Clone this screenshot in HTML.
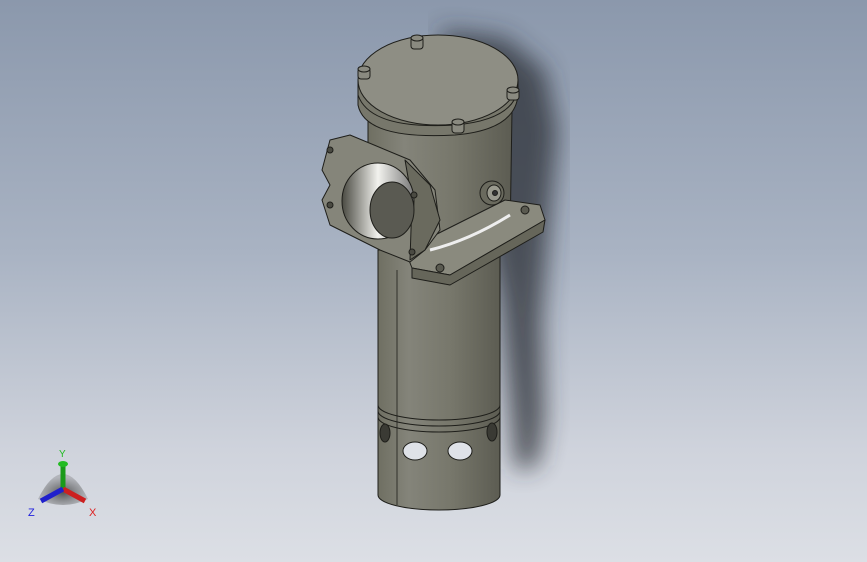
<!DOCTYPE html>
<html><head><style>
html,body{margin:0;padding:0;width:867px;height:562px;overflow:hidden}
body{background:linear-gradient(180deg,#8b98ac 0%,#a9b3c3 45%,#cfd3dc 80%,#dcdfe5 100%)}
svg{position:absolute;left:0;top:0}
</style></head><body>
<svg width="867" height="562" viewBox="0 0 867 562">
<defs>
<linearGradient id="cyl" x1="0" x2="1" y1="0" y2="0">
<stop offset="0" stop-color="#6f6f62"/><stop offset="0.25" stop-color="#84847a"/><stop offset="0.6" stop-color="#77776b"/><stop offset="1" stop-color="#5c5c52"/>
</linearGradient>
<linearGradient id="bore" x1="0" x2="1"><stop offset="0" stop-color="#4a4a42"/><stop offset="0.5" stop-color="#f2f2ee"/><stop offset="1" stop-color="#777"/></linearGradient>
<filter id="bl"><feGaussianBlur stdDeviation="12"/></filter>
<radialGradient id="ax" cx="0.5" cy="0.6" r="0.5"><stop offset="0" stop-color="#333" stop-opacity="0.8"/><stop offset="1" stop-color="#666" stop-opacity="0.3"/></radialGradient>
</defs>
<!-- shadow -->
<path d="M440 30 L505 38 L545 70 L558 130 L550 220 L542 320 L545 420 L538 465 L515 470 L500 300 Z" fill="#2b2f36" opacity="0.75" filter="url(#bl)"/>
<g stroke="#1e1e1a" stroke-width="1" stroke-linejoin="round">
<path d="M378 250 L378 495 A61 15 0 0 0 500 495 L500 250 Z" fill="url(#cyl)"/>
<line x1="397" y1="270" x2="397" y2="505" stroke-width="0.8"/>
<path d="M378 405 A61 15 0 0 0 500 405" fill="none"/>
<path d="M378 411 A61 15 0 0 0 500 411" fill="none"/>
<path d="M378 417 A61 15 0 0 0 500 417" fill="none"/>
<ellipse cx="385" cy="433" rx="5" ry="9" fill="#3a3a34"/>
<ellipse cx="415" cy="451" rx="12" ry="9" fill="#dfe2e8"/>
<ellipse cx="460" cy="451" rx="12" ry="9" fill="#dfe2e8"/>
<ellipse cx="492" cy="432" rx="5" ry="9" fill="#3a3a34"/>
<path d="M368 110 L368 240 L510 240 L512 110 Z" fill="url(#cyl)"/>
<path d="M405 250 L505 200 L540 205 L545 220 L450 275 L412 268 Z" fill="#8a8a7e"/>
<path d="M412 268 L450 275 L545 220 L543 232 L450 285 L412 278 Z" fill="#66665a"/>
<path d="M430 250 Q470 240 510 215" fill="none" stroke="#eee" stroke-width="3"/>
<circle cx="525" cy="210" r="4" fill="#5a5a50"/>
<circle cx="440" cy="268" r="4" fill="#5a5a50"/>
<circle cx="412" cy="256" r="3" fill="#5a5a50"/>
<ellipse cx="492" cy="193" rx="12" ry="12" fill="#6a6a5e"/>
<ellipse cx="494" cy="193" rx="7" ry="8" fill="#9a9a8e"/>
<circle cx="495" cy="193" r="2.5" fill="#333"/>
<path d="M358 80 L358 105 Q365 140 455 135 Q515 130 518 95 L518 80 Z" fill="#77776b"/>
<path d="M358 95 Q370 130 455 125 Q512 120 518 90" fill="none"/>
<ellipse cx="438" cy="80" rx="80" ry="45" fill="#8e8e84"/>
<g fill="#8a8a80">
<rect x="411" y="37" width="12" height="12" rx="3"/><ellipse cx="417" cy="38" rx="6" ry="3"/>
<rect x="358" y="68" width="12" height="11" rx="3"/><ellipse cx="364" cy="69" rx="6" ry="3"/>
<rect x="507" y="89" width="12" height="11" rx="3"/><ellipse cx="513" cy="90" rx="6" ry="3"/>
<rect x="452" y="121" width="12" height="12" rx="3"/><ellipse cx="458" cy="122" rx="6" ry="3"/>
</g>
<path d="M330 140 L350 135 L410 160 L435 190 L440 230 L425 250 L410 262 L380 250 L330 225 L322 200 L330 185 L322 170 Z" fill="#85857a"/>
<path d="M405 160 L430 185 L440 220 L425 250 L410 260 L412 200 Z" fill="#6a6a5e"/>
<ellipse cx="378" cy="201" rx="36" ry="38" fill="url(#bore)"/>
<ellipse cx="392" cy="210" rx="22" ry="28" fill="#5a5a52"/>
<circle cx="330" cy="150" r="3" fill="#4a4a42"/>
<circle cx="330" cy="205" r="3" fill="#4a4a42"/>
<circle cx="414" cy="195" r="3" fill="#4a4a42"/>
<circle cx="412" cy="252" r="3" fill="#4a4a42"/>
</g>
<g transform="translate(63,489)">
<path d="M-25 10 Q0 -40 25 10 Q0 22 -25 10Z" fill="url(#ax)"/>
<line x1="0" y1="0" x2="0" y2="-24" stroke="#1a9a1a" stroke-width="5"/>
<ellipse cx="0" cy="-25" rx="5" ry="3" fill="#22bb22"/>
<line x1="0" y1="0" x2="22" y2="12" stroke="#cc2020" stroke-width="5"/>
<line x1="0" y1="0" x2="-22" y2="12" stroke="#2020cc" stroke-width="5"/>
<text x="-4" y="-32" font-family="Liberation Sans,sans-serif" font-size="10" fill="#22bb22">Y</text>
<text x="26" y="27" font-family="Liberation Sans,sans-serif" font-size="11" fill="#dd2020">X</text>
<text x="-35" y="27" font-family="Liberation Sans,sans-serif" font-size="11" fill="#2020dd">Z</text>
</g>
</svg>
</body></html>
